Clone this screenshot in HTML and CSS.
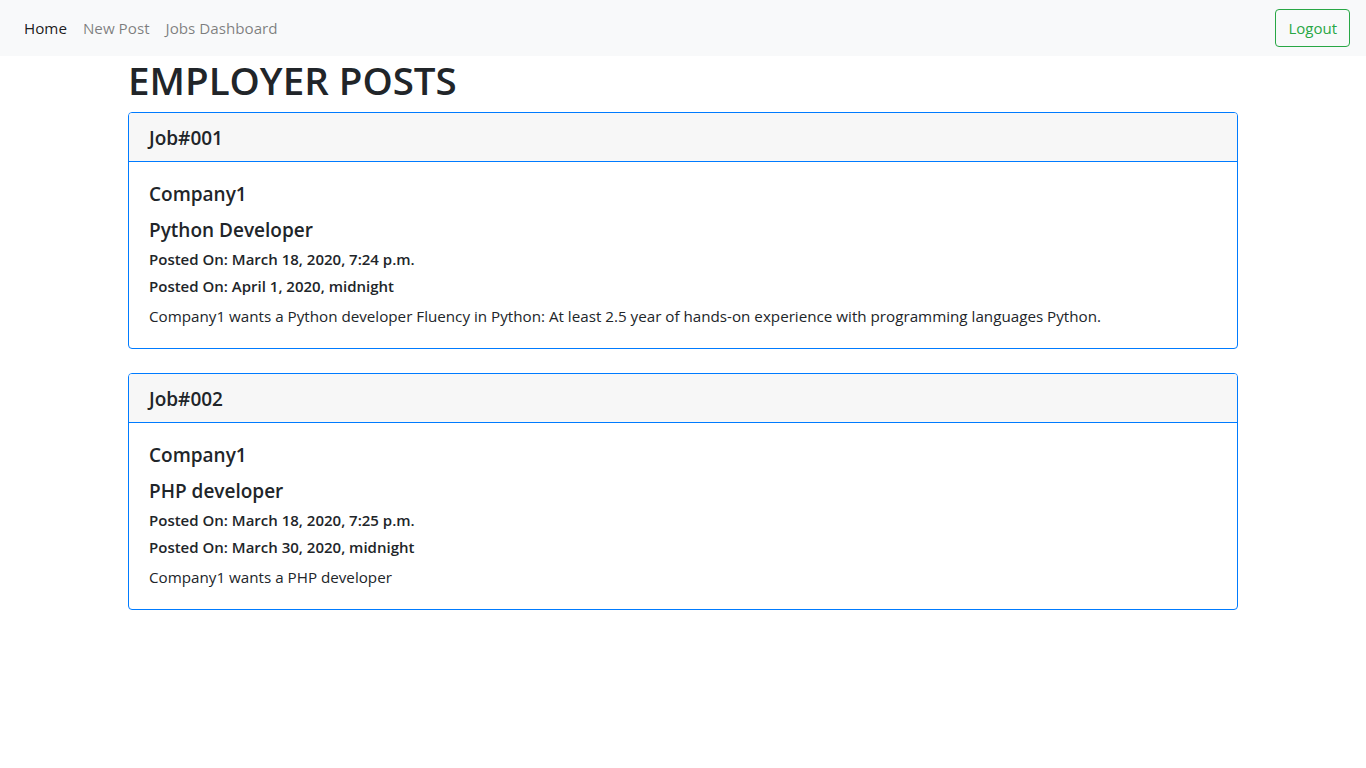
FILE: index.html
```html
<!DOCTYPE html>
<html lang="en">
<head>
<meta charset="utf-8">
<title>Employer Posts</title>
<link rel="stylesheet" href="styles.css">
</head>
<body>
<nav class="navbar">
  <ul class="nav-links">
    <li><a class="nav-link active" href="#">Home</a></li>
    <li><a class="nav-link" href="#">New Post</a></li>
    <li><a class="nav-link" href="#">Jobs Dashboard</a></li>
  </ul>
  <a class="btn-logout" href="#">Logout</a>
</nav>
<main class="container">
  <h1 class="page-title">EMPLOYER POSTS</h1>
  <section class="card">
    <div class="card-header"><h5 class="card-heading">Job#001</h5></div>
    <div class="card-body">
      <h5 class="card-title">Company1</h5>
      <h5 class="card-subtitle">Python Developer</h5>
      <h6 class="card-meta">Posted On: March 18, 2020, 7:24 p.m.</h6>
      <h6 class="card-meta">Posted On: April 1, 2020, midnight</h6>
      <p class="card-text">Company1 wants a Python developer Fluency in Python: At least 2.5 year of hands-on experience with programming languages Python.</p>
    </div>
  </section>
  <section class="card">
    <div class="card-header"><h5 class="card-heading">Job#002</h5></div>
    <div class="card-body">
      <h5 class="card-title">Company1</h5>
      <h5 class="card-subtitle">PHP developer</h5>
      <h6 class="card-meta">Posted On: March 18, 2020, 7:25 p.m.</h6>
      <h6 class="card-meta">Posted On: March 30, 2020, midnight</h6>
      <p class="card-text">Company1 wants a PHP developer</p>
    </div>
  </section>
</main>
</body>
</html>
```
FILE: styles.css
```css
* { box-sizing: border-box; }
html, body { margin: 0; padding: 0; }
body {
  font-family: "Open Sans", "Noto Sans", "Liberation Sans", sans-serif;
  font-size: 16px;
  line-height: 1.5;
  color: #212529;
  background: #fff;
}
.navbar {
  display: flex;
  align-items: center;
  justify-content: space-between;
  background: #f8f9fa;
  padding: 8px 16px;
  height: 56px;
}
.nav-links {
  display: flex;
  list-style: none;
  margin: 0;
  padding: 0;
}
.nav-link {
  display: block;
  padding: 8px;
  color: rgba(0,0,0,.5);
  text-decoration: none;
  font-size: 15.2px;
}
.nav-link.active { color: rgba(0,0,0,.9); }
.btn-logout {
  display: inline-block;
  color: #28a745;
  border: 1px solid #28a745;
  border-radius: 4px;
  padding: 6px 12px;
  text-decoration: none;
  font-size: 15px;
  line-height: 24px;
}
.container {
  width: 1110px;
  margin: 0 auto;
}
.page-title {
  font-size: 38.5px;
  font-weight: 600;
  line-height: 48px;
  margin: 0 0 8px;
}
.card {
  border: 1px solid #007bff;
  border-radius: 4px;
  margin-bottom: 24px;
  overflow: hidden;
}
.card-header {
  background: #f7f7f7;
  border-bottom: 1px solid #007bff;
  padding: 13px 20px 11px;
}
.card-heading {
  margin: 0;
  font-size: 19px;
  font-weight: 600;
  line-height: 24px;
}
.card-body { padding: 20px; }
.card-title,
.card-subtitle {
  margin: 0 0 8px;
  font-size: 19px;
  font-weight: 600;
  line-height: 24px;
}
.card-title { margin-bottom: 12px; }
.card-meta {
  margin: 0 0 8px;
  font-size: 15px;
  font-weight: 600;
  line-height: 19px;
}
.card-text {
  margin: 0;
  font-size: 15.2px;
  line-height: 24px;
}
```
